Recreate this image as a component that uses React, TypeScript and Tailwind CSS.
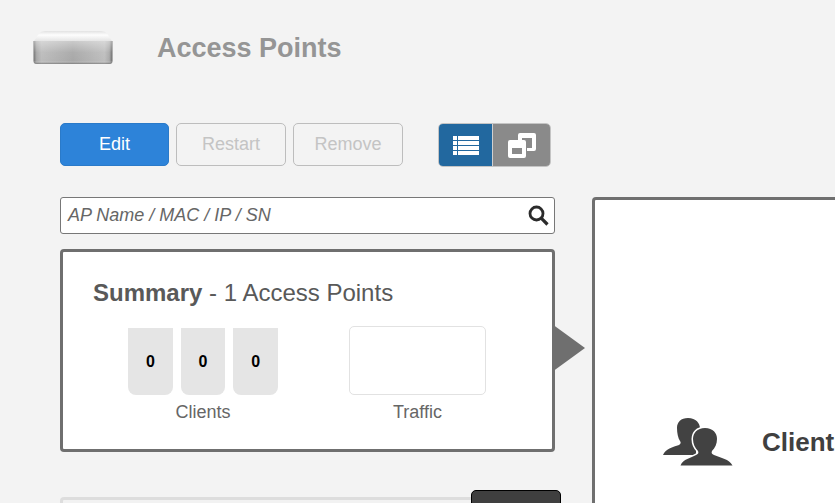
const font = 'font-["Liberation_Sans",Arial,sans-serif]'

function DeviceLogo() {
  return (
    <svg width="80" height="36" viewBox="0 0 80 36" className="block">
      <defs>
        <linearGradient id="lid" x1="0" y1="0" x2="0" y2="1">
          <stop offset="0" stopColor="#e2e2e2" />
          <stop offset="0.4" stopColor="#fdfdfd" />
          <stop offset="1" stopColor="#e4e4e4" />
        </linearGradient>
        <linearGradient id="front" x1="0" y1="0" x2="1" y2="0">
          <stop offset="0" stopColor="#6e6e6e" />
          <stop offset="0.04" stopColor="#a8a8a8" />
          <stop offset="0.1" stopColor="#bcbcbc" />
          <stop offset="0.5" stopColor="#a8a8a8" />
          <stop offset="0.9" stopColor="#bebebe" />
          <stop offset="0.96" stopColor="#aaaaaa" />
          <stop offset="1" stopColor="#666666" />
        </linearGradient>
        <linearGradient id="shade" x1="0" y1="0" x2="0" y2="1">
          <stop offset="0" stopColor="#ffffff" stopOpacity="0.4" />
          <stop offset="0.5" stopColor="#ffffff" stopOpacity="0.05" />
          <stop offset="0.85" stopColor="#ffffff" stopOpacity="0" />
          <stop offset="1" stopColor="#555555" stopOpacity="0.6" />
        </linearGradient>
      </defs>
      <path d="M1 11 L6 3.500 Q8 1 12 1 L68 1 Q72 1 74 3.500 L79 11 Z" fill="url(#lid)" />
      <path d="M0.500 11 L79.500 11 L79.500 31 Q79.500 34 76 34 L4 34 Q0.500 34 0.500 31 Z" fill="url(#front)" />
      <path d="M0.500 11 L79.500 11 L79.500 31 Q79.500 34 76 34 L4 34 Q0.500 34 0.500 31 Z" fill="url(#shade)" />
    </svg>
  )
}

function ListIcon() {
  return (
    <svg width="26" height="19" viewBox="0 0 26 19" fill="#fff" className="block">
      {[0, 5, 10, 15].map((y) => (
        <g key={y}>
          <rect x="0" y={y} width="4" height="4" />
          <rect x="5" y={y} width="21" height="4" />
        </g>
      ))}
    </svg>
  )
}

function WindowsIcon() {
  return (
    <svg width="28" height="25" viewBox="0 0 28 25" className="block">
      <path
        fill="#fff"
        d="M12 0 L26 0 Q28 0 28 2 L28 16 Q28 18 26 18 L19 18 L19 15 L24 15 L24 5 L14 5 L14 7 L10 7 L10 2 Q10 0 12 0 Z"
      />
      <path
        fill="#fff"
        fillRule="evenodd"
        d="M2 7 L16 7 Q18 7 18 9 L18 23 Q18 25 16 25 L2 25 Q0 25 0 23 L0 9 Q0 7 2 7 Z M4 15 L4 21 L14 21 L14 15 Z"
      />
    </svg>
  )
}

function SearchIcon() {
  return (
    <svg width="21" height="21" viewBox="0 0 21 21" fill="none" stroke="#2b2b2b" className="block">
      <circle cx="8.500" cy="8.500" r="6.500" strokeWidth="2.800" />
      <path d="M13.200 13.200 L19.500 19.500" strokeWidth="3.200" />
    </svg>
  )
}

function ClientsIcon() {
  return (
    <svg width="70" height="48" viewBox="0 0 70 48" className="block">
      <path
        fill="#424242"
        d="M25 0 C33 0 37 5 37 11 C37 16 35 21 33 24 L33 37 L0 37 C2 31 10 29 16 27 C18 26 18 24 17 23 C15 20 14 15 14 10 C14 4 18 0 25 0 Z"
      />
      <path
        fill="#424242"
        stroke="#ffffff"
        strokeWidth="3"
        paintOrder="stroke"
        d="M42 10 C50 10 54 15 54 21 C54 26 52 30 49 33 C48 35 49 36 51 37 C58 40 66 41 69.500 47.500 L17.500 47.500 C20 41 28 40 33 37 C35 36 36 35 35 33 C32 30 30 26 30 21 C30 15 34 10 42 10 Z"
      />
    </svg>
  )
}

export default function App() {
  return (
    <div className={`${font} w-[835px] h-[503px] overflow-hidden bg-[#f3f3f3]`}>
      {/* Page header */}
      <div className="flex items-center h-[96px] pl-[33px] pb-[1px]">
        <DeviceLogo />
        <h1 className="ml-[44px] mt-[1px] text-[27px] font-bold text-[#959595]">Access Points</h1>
      </div>

      <div className="flex pl-[60px]">
        {/* Left column */}
        <div className="w-[495px] shrink-0">
          <div className="flex mt-[27px] h-[44px]">
            <button className="w-[109px] h-[43px] rounded-[5px] bg-[#2d83d9] border border-[#2a7ac9] text-white text-[18px]">
              Edit
            </button>
            <button className="ml-[7px] w-[110px] h-[43px] rounded-[5px] border border-[#bdbdbd] text-[#c4c4c4] text-[18px]">
              Restart
            </button>
            <button className="ml-[7px] w-[110px] h-[43px] rounded-[5px] border border-[#bdbdbd] text-[#c4c4c4] text-[18px]">
              Remove
            </button>
            <div className="ml-[35px] flex h-[44px] rounded-[5px] overflow-hidden border border-[#c4c4c4]">
              <div className="w-[53px] flex items-center justify-center bg-[#22689f]">
                <ListIcon />
              </div>
              <div className="w-[58px] flex items-center justify-center bg-[#8a8a8a] border-l border-[#d0d0d0]">
                <WindowsIcon />
              </div>
            </div>
          </div>

          <div className="mt-[30px] h-[37px] flex items-center justify-between pl-[7px] pr-[5px] bg-white border border-[#777777] rounded-[3px]">
            <span className="text-[18px] italic text-[#666666]">AP Name / MAC / IP / SN</span>
            <SearchIcon />
          </div>

          {/* Summary card */}
          <div className="relative mt-[15px] h-[203px] bg-white border-[3px] border-[#6f6f6f] rounded-[4px] pt-[26px] pl-[30px]">
            <div className="text-[24px] text-[#595959] leading-[30px]">
              <span className="font-bold">Summary</span> - 1 Access Points
            </div>
            <div className="flex mt-[18px]">
              <div className="ml-[35px] w-[150px] flex flex-col items-center">
                <div className="flex gap-[8px] w-[150px] mt-[2px]">
                  {[0, 0, 0].map((v, i) => (
                    <div
                      key={i}
                      className="w-[45px] h-[67px] bg-[#e5e5e5] rounded-b-[8px] flex items-center justify-center text-[16px] font-bold text-black"
                    >
                      {v}
                    </div>
                  ))}
                </div>
                <div className="mt-[6px] text-[18px] leading-[22px] text-[#666666]">Clients</div>
              </div>
              <div className="ml-[71px] w-[137px] flex flex-col items-center">
                <div className="w-[137px] h-[69px] bg-white border border-[#e2e2e2] rounded-[5px]" />
                <div className="mt-[6px] text-[18px] leading-[22px] text-[#666666]">Traffic</div>
              </div>
            </div>
            {/* Pointer into the detail panel */}
            <div className="absolute left-[489px] top-[72px] w-0 h-0 border-y-[24px] border-y-transparent border-l-[33px] border-l-[#6f6f6f]" />
          </div>

          {/* Next section panel, cut by the window */}
          <div className="relative mt-[45px] h-[40px] bg-[#f2f2f2] border-[3px] border-[#dddddd] rounded-[4px]">
            <div className="absolute left-[408px] top-[-10px] w-[90px] h-[40px] bg-[#3f3f3f] border border-black rounded-[5px]" />
          </div>
        </div>

        {/* Detail panel, runs past the right edge */}
        <div className="ml-[37px] mt-[101px] w-[300px] h-[340px] shrink-0 bg-white border-[3px] border-[#6f6f6f] rounded-[4px] pl-[68px] pt-[218px]">
          <div className="flex items-center">
            <ClientsIcon />
            <span className="ml-[29px] text-[26px] font-bold text-[#404040]">Clients</span>
          </div>
        </div>
      </div>
    </div>
  )
}
